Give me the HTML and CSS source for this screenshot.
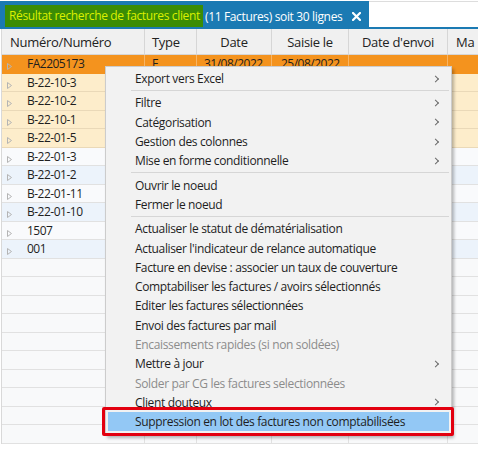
FILE: index.html
```html
<!DOCTYPE html>
<html lang="fr">
<head>
<meta charset="utf-8">
<title>Résultat recherche de factures client</title>
<link rel="stylesheet" href="styles.css">
</head>
<body>
<div class="screen">
  <div class="tabbar">
    <div class="tab">
      <span class="hl">Résultat recherche de factures client</span>
      <span class="tab-rest">(11 Factures) soit 30 lignes</span>
      <svg class="tab-close" width="9" height="9" viewBox="0 0 9 9"><path d="M1 1 L8 8 M8 1 L1 8" stroke="#ffffff" stroke-width="2.2" stroke-linecap="square"/></svg>
    </div>
    <div class="tab-fill"></div>
  </div>

  <div class="grid">
    <div class="row head">
      <div class="cell c-num">Numéro/Numéro</div>
      <div class="cell c-type">Type</div>
      <div class="cell c-center">Date</div>
      <div class="cell c-center">Saisie le</div>
      <div class="cell c-center">Date d'envoi</div>
      <div class="cell c-last">Ma</div>
    </div>

    <div class="row sel">
      <div class="cell c-num"><svg class="tri" width="5" height="7" viewBox="0 0 5 7"><path d="M0.5 0.5 L4.5 3.5 L0.5 6.5 Z" fill="none" stroke="#b4b4b4" stroke-width="1"/></svg>FA2205173</div>
      <div class="cell c-type">F</div>
      <div class="cell c-date">31/08/2022</div>
      <div class="cell c-date2">25/08/2022</div>
      <div class="cell"></div>
      <div class="cell c-last"></div>
    </div>
    <div class="row cream">
      <div class="cell c-num"><svg class="tri" width="5" height="7" viewBox="0 0 5 7"><path d="M0.5 0.5 L4.5 3.5 L0.5 6.5 Z" fill="none" stroke="#b4b4b4" stroke-width="1"/></svg>B-22-10-3</div>
      <div class="cell"></div><div class="cell"></div><div class="cell"></div><div class="cell"></div><div class="cell c-last"></div>
    </div>
    <div class="row cream">
      <div class="cell c-num"><svg class="tri" width="5" height="7" viewBox="0 0 5 7"><path d="M0.5 0.5 L4.5 3.5 L0.5 6.5 Z" fill="none" stroke="#b4b4b4" stroke-width="1"/></svg>B-22-10-2</div>
      <div class="cell"></div><div class="cell"></div><div class="cell"></div><div class="cell"></div><div class="cell c-last"></div>
    </div>
    <div class="row cream">
      <div class="cell c-num"><svg class="tri" width="5" height="7" viewBox="0 0 5 7"><path d="M0.5 0.5 L4.5 3.5 L0.5 6.5 Z" fill="none" stroke="#b4b4b4" stroke-width="1"/></svg>B-22-10-1</div>
      <div class="cell"></div><div class="cell"></div><div class="cell"></div><div class="cell"></div><div class="cell c-last"></div>
    </div>
    <div class="row cream">
      <div class="cell c-num"><svg class="tri" width="5" height="7" viewBox="0 0 5 7"><path d="M0.5 0.5 L4.5 3.5 L0.5 6.5 Z" fill="none" stroke="#b4b4b4" stroke-width="1"/></svg>B-22-01-5</div>
      <div class="cell"></div><div class="cell"></div><div class="cell"></div><div class="cell"></div><div class="cell c-last"></div>
    </div>
    <div class="row odd">
      <div class="cell c-num"><svg class="tri" width="5" height="7" viewBox="0 0 5 7"><path d="M0.5 0.5 L4.5 3.5 L0.5 6.5 Z" fill="none" stroke="#b4b4b4" stroke-width="1"/></svg>B-22-01-3</div>
      <div class="cell"></div><div class="cell"></div><div class="cell"></div><div class="cell"></div><div class="cell c-last"></div>
    </div>
    <div class="row even">
      <div class="cell c-num"><svg class="tri" width="5" height="7" viewBox="0 0 5 7"><path d="M0.5 0.5 L4.5 3.5 L0.5 6.5 Z" fill="none" stroke="#b4b4b4" stroke-width="1"/></svg>B-22-01-2</div>
      <div class="cell"></div><div class="cell"></div><div class="cell"></div><div class="cell"></div><div class="cell c-last"></div>
    </div>
    <div class="row odd">
      <div class="cell c-num"><svg class="tri" width="5" height="7" viewBox="0 0 5 7"><path d="M0.5 0.5 L4.5 3.5 L0.5 6.5 Z" fill="none" stroke="#b4b4b4" stroke-width="1"/></svg>B-22-01-11</div>
      <div class="cell"></div><div class="cell"></div><div class="cell"></div><div class="cell"></div><div class="cell c-last"></div>
    </div>
    <div class="row even">
      <div class="cell c-num"><svg class="tri" width="5" height="7" viewBox="0 0 5 7"><path d="M0.5 0.5 L4.5 3.5 L0.5 6.5 Z" fill="none" stroke="#b4b4b4" stroke-width="1"/></svg>B-22-01-10</div>
      <div class="cell"></div><div class="cell"></div><div class="cell"></div><div class="cell"></div><div class="cell c-last"></div>
    </div>
    <div class="row odd">
      <div class="cell c-num"><svg class="tri" width="5" height="7" viewBox="0 0 5 7"><path d="M0.5 0.5 L4.5 3.5 L0.5 6.5 Z" fill="none" stroke="#b4b4b4" stroke-width="1"/></svg>1507</div>
      <div class="cell"></div><div class="cell"></div><div class="cell"></div><div class="cell"></div><div class="cell c-last"></div>
    </div>
    <div class="row even">
      <div class="cell c-num"><svg class="tri" width="5" height="7" viewBox="0 0 5 7"><path d="M0.5 0.5 L4.5 3.5 L0.5 6.5 Z" fill="none" stroke="#b4b4b4" stroke-width="1"/></svg>001</div>
      <div class="cell"></div><div class="cell"></div><div class="cell"></div><div class="cell"></div><div class="cell c-last"></div>
    </div>
    <div class="row empty"><div class="cell"></div><div class="cell"></div><div class="cell"></div><div class="cell"></div><div class="cell"></div><div class="cell c-last"></div></div>
    <div class="row empty"><div class="cell"></div><div class="cell"></div><div class="cell"></div><div class="cell"></div><div class="cell"></div><div class="cell c-last"></div></div>
    <div class="row empty"><div class="cell"></div><div class="cell"></div><div class="cell"></div><div class="cell"></div><div class="cell"></div><div class="cell c-last"></div></div>
    <div class="row empty"><div class="cell"></div><div class="cell"></div><div class="cell"></div><div class="cell"></div><div class="cell"></div><div class="cell c-last"></div></div>
    <div class="row empty"><div class="cell"></div><div class="cell"></div><div class="cell"></div><div class="cell"></div><div class="cell"></div><div class="cell c-last"></div></div>
    <div class="row empty"><div class="cell"></div><div class="cell"></div><div class="cell"></div><div class="cell"></div><div class="cell"></div><div class="cell c-last"></div></div>
    <div class="row empty"><div class="cell"></div><div class="cell"></div><div class="cell"></div><div class="cell"></div><div class="cell"></div><div class="cell c-last"></div></div>
    <div class="row empty"><div class="cell"></div><div class="cell"></div><div class="cell"></div><div class="cell"></div><div class="cell"></div><div class="cell c-last"></div></div>
    <div class="row empty"><div class="cell"></div><div class="cell"></div><div class="cell"></div><div class="cell"></div><div class="cell"></div><div class="cell c-last"></div></div>
    <div class="row empty"><div class="cell"></div><div class="cell"></div><div class="cell"></div><div class="cell"></div><div class="cell"></div><div class="cell c-last"></div></div>
  </div>

  <div class="menu">
    <div class="item sub">Export vers Excel</div>
    <div class="sep"></div>
    <div class="item sub">Filtre</div>
    <div class="item sub">Catégorisation</div>
    <div class="item sub">Gestion des colonnes</div>
    <div class="item sub">Mise en forme conditionnelle</div>
    <div class="sep"></div>
    <div class="item">Ouvrir le noeud</div>
    <div class="item">Fermer le noeud</div>
    <div class="sep"></div>
    <div class="item">Actualiser le statut de dématérialisation</div>
    <div class="item">Actualiser l'indicateur de relance automatique</div>
    <div class="item">Facture en devise : associer un taux de couverture</div>
    <div class="item">Comptabiliser les factures / avoirs sélectionnés</div>
    <div class="item">Editer les factures sélectionnées</div>
    <div class="item">Envoi des factures par mail</div>
    <div class="item disabled">Encaissements rapides (si non soldées)</div>
    <div class="item sub">Mettre à jour</div>
    <div class="item disabled">Solder par CG les factures selectionnées</div>
    <div class="item sub">Client douteux</div>
    <div class="item active">Suppression en lot des factures non comptabilisées</div>
  </div>
  <div class="redbox"></div>
</div>
</body>
</html>
```

FILE: styles.css
```css
html, body {
  margin: 0;
  padding: 0;
  background: #ffffff;
}

.screen {
  position: relative;
  width: 478px;
  height: 457px;
  overflow: hidden;
  font-family: "Open Sans", "Noto Sans", sans-serif;
  color: #1e1e1e;
  padding-top: 1px;
  box-sizing: border-box;
}

/* ---------- tab bar ---------- */
.tabbar {
  display: flex;
  height: 28px;
}

.tab {
  display: flex;
  align-items: center;
  background: #1b7ab3;
  padding: 4px 0 2px 5px;
  box-sizing: border-box;
  width: 369px;
  font-size: 12px;
  letter-spacing: -0.35px;
  white-space: nowrap;
}

.hl {
  background: #3b8c05;
  color: #dcf000;
  height: 22px;
  line-height: 22px;
  padding: 0 3px 0 4px;
}

.tab-rest {
  color: #ffffff;
  padding-left: 2px;
}

.tab-close {
  margin-left: 10px;
  margin-top: 1px;
}

.tab-fill {
  flex: 1;
  background: #ffffff;
  border-top: 1px solid #dddddd;
  border-bottom: 2px solid #1b7ab3;
}

/* ---------- grid ---------- */
.grid {
  margin-left: 1px;
  border-left: 1px solid #d9d9d9;
}

.row {
  display: grid;
  grid-template-columns: 143px 52px 75px 77px 99px 1fr;
  height: 18.5px;
  font-size: 12px;
  letter-spacing: -0.5px;
}

.cell {
  border-right: 1px solid #e2e2e2;
  border-bottom: 1px solid #e2e2e2;
  white-space: nowrap;
  overflow: hidden;
  display: flex;
  align-items: center;
  box-sizing: border-box;
}

.row.head {
  height: 26px;
  background: #f0f0f0;
  font-size: 13px;
  letter-spacing: -0.3px;
  color: #222222;
}

.row.head .cell {
  border-right: 1px solid #d6d6d6;
  border-bottom: 1px solid #d6d6d6;
}

.row.head .c-num {
  padding-left: 8px;
}

.row.head .c-type {
  padding-left: 7px;
}

.row.head .c-center {
  justify-content: center;
}

.row.head .c-last {
  padding-left: 8px;
  border-right: none;
}

.row .c-num {
  padding-left: 5px;
}

.row .c-type,
.row .c-date {
  padding-left: 7px;
}

.row .c-date2 {
  padding-left: 9px;
}

.tri {
  flex: none;
  margin-right: 15px;
  margin-top: 6px;
}

.row.sel { background: #f4931e; }
.row.sel .cell { border-right-color: #f7b566; border-bottom-color: #f4931e; }
.row.cream { background: #fdedcb; }
.row.cream .cell { border-color: #ead9b8; }
.row.odd { background: #f9fafc; }
.row.even { background: #ecf3fb; }
.row.empty { background: #f8f9fa; }
.row.odd .cell,
.row.even .cell,
.row.empty .cell { border-color: #e1e1e1; }

.row .c-last { border-right: none; }

/* ---------- context menu ---------- */
.menu {
  position: absolute;
  left: 105px;
  top: 66px;
  width: 347px;
  box-sizing: border-box;
  background: #f2f2f2;
  border: 1px solid #cccccc;
  box-shadow: 2px 3px 3px rgba(0, 0, 0, 0.28);
  padding: 2px 2px 3px 2px;
  font-size: 12px;
  letter-spacing: -0.35px;
  color: #1e1e1e;
}

.item {
  height: 19.3px;
  display: flex;
  align-items: center;
  padding-left: 27px;
  position: relative;
  white-space: nowrap;
}

.item.sub::after {
  content: "";
  position: absolute;
  right: 11px;
  top: 50%;
  width: 4px;
  height: 4px;
  border-top: 1.3px solid #6a6a6a;
  border-right: 1.3px solid #6a6a6a;
  transform: translateY(-50%) rotate(45deg);
}

.item.disabled {
  color: #8c8c8c;
}

.item.active {
  background: #93c8f5;
}

.sep {
  height: 5px;
  display: flex;
  align-items: center;
  margin-left: 23px;
}

.sep::before {
  content: "";
  display: block;
  width: 100%;
  height: 1px;
  background: #d6d6d6;
}

.redbox {
  position: absolute;
  left: 102px;
  top: 407px;
  width: 352px;
  height: 29px;
  box-sizing: border-box;
  border: 3px solid #e3000f;
  border-radius: 2px;
}
```
